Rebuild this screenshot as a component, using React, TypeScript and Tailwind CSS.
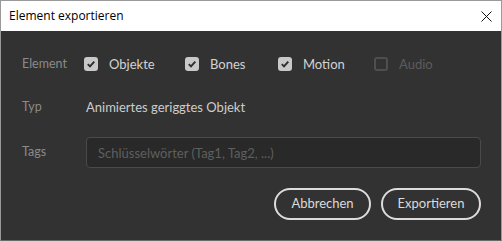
// Export dialog — "Element exportieren"
import { useState } from 'react';

const FONT = "font-['Lato','Noto_Sans',sans-serif]";

const Check = ({ checked, disabled, label, onToggle, width }: {
  checked: boolean; disabled?: boolean; label: string; onToggle?: () => void; width: string;
}) => (
  <button
    type="button"
    onClick={disabled ? undefined : onToggle}
    className={`flex items-center gap-[11px] ${width} ${disabled ? 'cursor-default' : ''}`}
  >
    {checked ? (
      <span className="w-[14px] h-[14px] shrink-0 rounded-[3px] bg-[#c9c9c9] flex items-center justify-center">
        <svg width="10" height="10" viewBox="0 0 10 10">
          <path d="M1.8 5.2 L4 7.4 L8.3 2.6" fill="none" stroke="#2e2e2e" strokeWidth="1.9" />
        </svg>
      </span>
    ) : (
      <span className={`w-[14px] h-[14px] shrink-0 rounded-[3px] border-2 ${disabled ? 'border-[#4f4f4f]' : 'border-[#b0b0b0]'}`} />
    )}
    <span className={`text-[13px] leading-none ${disabled ? 'text-[#5c5c5c]' : 'text-[#d2d2d2]'}`}>{label}</span>
  </button>
);

export default function App() {
  const [checks, setChecks] = useState({ objekte: true, bones: true, motion: true });
  const toggle = (k: keyof typeof checks) => setChecks(c => ({ ...c, [k]: !c[k] }));

  return (
    <div className={`w-[502px] h-[241px] flex flex-col border border-[#9a9a9a] border-b-[#6a6a6a] bg-[#323232] ${FONT}`}>
      {/* title bar */}
      <div className="h-[30px] shrink-0 bg-white flex items-center justify-between pl-[8px] pr-[9px]">
        <span className="text-[12px] text-black font-['Open_Sans',sans-serif] leading-none">Element exportieren</span>
        <svg width="11" height="11" viewBox="0 0 11 11">
          <path d="M0.5 0.5 L10.5 10.5 M10.5 0.5 L0.5 10.5" stroke="#111" strokeWidth="1" />
        </svg>
      </div>

      {/* body */}
      <div className="flex-1 flex flex-col pl-[21px] pr-[20px]">
        <div className="flex items-center h-[14px] mt-[26px]">
          <span className="w-[62px] text-[12.5px] text-[#8b8b8b] leading-none">Element</span>
          <Check width="w-[101px]" label="Objekte" checked={checks.objekte} onToggle={() => toggle('objekte')} />
          <Check width="w-[93px]" label="Bones" checked={checks.bones} onToggle={() => toggle('bones')} />
          <Check width="w-[96px]" label="Motion" checked={checks.motion} onToggle={() => toggle('motion')} />
          <Check width="w-[70px]" label="Audio" checked={false} disabled />
        </div>

        <div className="flex items-center h-[14px] mt-[29px]">
          <span className="w-[64px] text-[12.5px] text-[#8b8b8b] leading-none">Typ</span>
          <span className="text-[13px] text-[#cdcdcd] leading-none">Animiertes geriggtes Objekt</span>
        </div>

        <div className="flex items-center mt-[23px]">
          <span className="w-[64px] text-[12.5px] text-[#8b8b8b] leading-none">Tags</span>
          <input
            placeholder="Schlüsselwörter (Tag1, Tag2, ...)"
            className="flex-1 h-[31px] rounded-[4px] bg-[#292929] border border-[#4a4a4a] px-[11px] text-[13px] text-[#cdcdcd] placeholder:text-[#5f5f5f] outline-none"
          />
        </div>

        <div className="flex justify-end gap-[10px] mt-[20px]">
          <button className="w-[97px] h-[32px] rounded-full border-2 border-[#dcdcdc] text-[13px] text-[#dadada]">
            Abbrechen
          </button>
          <button className="w-[100px] h-[32px] rounded-full border-2 border-[#dcdcdc] text-[13px] text-[#dadada]">
            Exportieren
          </button>
        </div>
      </div>
    </div>
  );
}
